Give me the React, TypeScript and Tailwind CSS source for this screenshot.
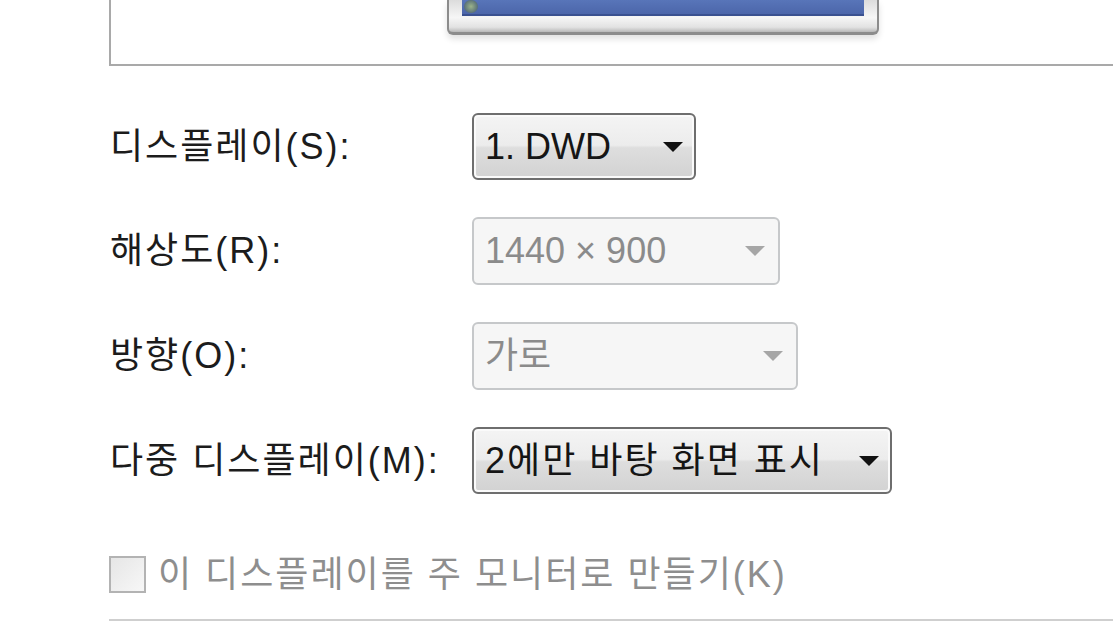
import React from 'react';

function Arrow({ disabled }: { disabled?: boolean }) {
  return (
    <svg
      width="20"
      height="10"
      viewBox="0 0 20 10"
      className={disabled ? 'fill-[#a6a6a6]' : 'fill-[#111111]'}
    >
      <polygon points="0,0 20,0 10,10" />
    </svg>
  );
}

interface ComboProps {
  value: string;
  width: string;
  disabled?: boolean;
  wide?: boolean;
}

function Combo({ value, width, disabled, wide }: ComboProps) {
  return (
    <div
      className={
        disabled
          ? `${width} h-[68px] flex items-center justify-between pl-[11px] pr-[13px] rounded-[6px] border-2 border-[#c6c8ca] bg-[#f6f6f6] text-[#8b8b8b]`
          : `${width} h-[67px] flex items-center justify-between pl-[11px] pr-[11px] rounded-[6px] border-2 border-[#6e6e6e] bg-[linear-gradient(to_bottom,#f4f4f4_0%,#ececec_48%,#dedede_52%,#d2d2d2_100%)] shadow-[inset_0_0_0_2px_#fafafa] text-[#151515]`
      }
    >
      <span className={wide ? 'leading-none whitespace-nowrap tracking-[2px]' : 'leading-none whitespace-nowrap'}>
        {value}
      </span>
      <Arrow disabled={disabled} />
    </div>
  );
}

function Monitor() {
  return (
    <div className="ml-[336px] w-[432px] h-[32px] flex flex-col">
      <div className="flex-1 flex px-[13px] pb-[16px] rounded-b-[6px] border-x-2 border-b-[3px] border-[#8c8c8c] bg-[linear-gradient(to_bottom,#dcdcdc_0%,#f6f6f6_55%,#e2e2e2_85%,#b8b8b8_100%)] shadow-[0_4px_6px_rgba(0,0,0,0.12)]">
        <div className="flex-1 flex items-end border-b-2 border-[#3a5190] bg-[linear-gradient(to_bottom,#5875b9,#4c66aa)]">
          <div className="w-[14px] h-[13px] ml-[2px] mb-[1px] rounded-full bg-[radial-gradient(circle,#9bb38a,#3e5570)]" />
        </div>
      </div>
    </div>
  );
}

export default function App() {
  const rows = [
    { label: '디스플레이(S):', value: '1. DWD', width: 'w-[224px]' },
    { label: '해상도(R):', value: '1440 × 900', width: 'w-[308px]', disabled: true },
    { label: '방향(O):', value: '가로', width: 'w-[326px]', disabled: true },
    { label: '다중 디스플레이(M):', value: '2에만 바탕 화면 표시', width: 'w-[420px]', wide: true },
  ];

  return (
    <div className="w-[1113px] h-[633px] overflow-hidden bg-white text-[36px] font-['Liberation_Sans','Noto_Sans_CJK_KR',sans-serif]">
      <div className="ml-[109px] w-[1100px] h-[66px] border-l-2 border-b-2 border-[#a9a9a9]">
        <Monitor />
      </div>

      <div className="ml-[110px] mt-[47px] flex flex-col gap-[37px]">
        {rows.map((row) => (
          <div key={row.label} className="flex items-center">
            <div className="w-[362px] leading-none text-[#1c1c1c] whitespace-nowrap tracking-[2px]">
              {row.label}
            </div>
            <Combo value={row.value} width={row.width} disabled={row.disabled} wide={row.wide} />
          </div>
        ))}
      </div>

      <div className="ml-[109px] mt-[62px] flex items-center gap-[12px] text-[#8e8e8e]">
        <div className="w-[37px] h-[37px] border-2 border-[#b3b3b3] bg-[linear-gradient(135deg,#e6e6e6,#f7f7f7)]" />
        <span className="leading-none whitespace-nowrap tracking-[2px]">
          이 디스플레이를 주 모니터로 만들기(K)
        </span>
      </div>

      <div className="ml-[109px] mt-[26px] h-[2px] bg-[#cfcfcf]" />
    </div>
  );
}
